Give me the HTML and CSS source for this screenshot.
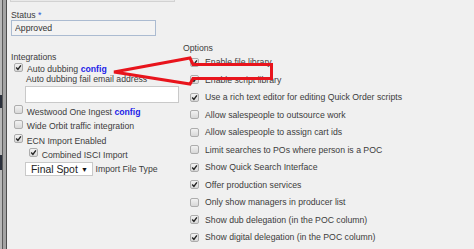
FILE: index.html
```html
<!DOCTYPE html>
<html lang="en">
<head>
    <meta charset="UTF-8">
    <title>Station Settings</title>
    <link rel="stylesheet" href="styles.css">
</head>
<body>
    <div class="page">
        <div class="edge"></div>
        <div class="panel">
            <div class="topbox"></div>
            <div class="cols">
                <div class="left">
                    <div class="status-label">Status <span class="req">*</span></div>
                    <input class="status-input" type="text" value="Approved">

                    <div class="group-label">Integrations</div>
                    <div class="row auto">
                        <span class="box on"><svg viewBox="0 0 7 7"><path d="M1.2 3.6 L2.9 5.4 L5.9 1.3"/></svg></span>
                        <span>Auto dubbing <a class="cfg">config</a></span>
                    </div>
                    <div class="sub-label">Auto dubbing fail email address</div>
                    <input class="email" type="text">

                    <div class="row first">
                        <span class="box"></span>
                        <span>Westwood One Ingest <a class="cfg">config</a></span>
                    </div>
                    <div class="row">
                        <span class="box"></span>
                        <span>Wide Orbit traffic integration</span>
                    </div>
                    <div class="row">
                        <span class="box on"><svg viewBox="0 0 7 7"><path d="M1.2 3.6 L2.9 5.4 L5.9 1.3"/></svg></span>
                        <span>ECN Import Enabled</span>
                    </div>
                    <div class="row nested">
                        <span class="box on"><svg viewBox="0 0 7 7"><path d="M1.2 3.6 L2.9 5.4 L5.9 1.3"/></svg></span>
                        <span>Combined ISCI Import</span>
                    </div>
                    <div class="select-row">
                        <div class="fake-select"><span>Final Spot</span><span class="caret">&#9660;</span></div>
                        <span class="select-label">Import File Type</span>
                    </div>
                </div>

                <div class="right">
                    <div class="group-label-right">Options</div>
                    <div class="opt"><span class="box on"><svg viewBox="0 0 7 7"><path d="M1.2 3.6 L2.9 5.4 L5.9 1.3"/></svg></span>Enable file library</div>
                    <div class="opt"><span class="box on"><svg viewBox="0 0 7 7"><path d="M1.2 3.6 L2.9 5.4 L5.9 1.3"/></svg></span>Enable script library</div>
                    <div class="opt"><span class="box on"><svg viewBox="0 0 7 7"><path d="M1.2 3.6 L2.9 5.4 L5.9 1.3"/></svg></span>Use a rich text editor for editing Quick Order scripts</div>
                    <div class="opt"><span class="box"></span>Allow salespeople to outsource work</div>
                    <div class="opt"><span class="box"></span>Allow salespeople to assign cart ids</div>
                    <div class="opt"><span class="box"></span>Limit searches to POs where person is a POC</div>
                    <div class="opt"><span class="box on"><svg viewBox="0 0 7 7"><path d="M1.2 3.6 L2.9 5.4 L5.9 1.3"/></svg></span>Show Quick Search Interface</div>
                    <div class="opt"><span class="box on"><svg viewBox="0 0 7 7"><path d="M1.2 3.6 L2.9 5.4 L5.9 1.3"/></svg></span>Offer production services</div>
                    <div class="opt"><span class="box"></span>Only show managers in producer list</div>
                    <div class="opt"><span class="box on"><svg viewBox="0 0 7 7"><path d="M1.2 3.6 L2.9 5.4 L5.9 1.3"/></svg></span>Show dub delegation (in the POC column)</div>
                    <div class="opt"><span class="box on"><svg viewBox="0 0 7 7"><path d="M1.2 3.6 L2.9 5.4 L5.9 1.3"/></svg></span>Show digital delegation (in the POC column)</div>
                </div>
            </div>
        </div>

        <!-- annotation drawn over the form -->
        <svg class="arrow" viewBox="0 0 474 249">
            <polygon points="114,72 190,58 193,64.5 271.5,64.5 271.5,78.5 193,78.5 190,84"/>
        </svg>
    </div>
</body>
</html>
```

FILE: styles.css
```css
body {
    margin: 0;
    background-color: #f0f0f0;
    font-family: "Liberation Sans", Arial, sans-serif;
    font-size: 8.7px;
    color: #3c3c3c;
}
.page {
    position: relative;
    display: flex;
    height: 249px;
    overflow: hidden;
}
.edge {
    flex: none;
    width: 7px;
    background:
        linear-gradient(#2b303c, #2b303c) 0 95px / 2px 13px no-repeat,
        linear-gradient(#2b303c, #2b303c) 0 155px / 2px 15px no-repeat,
        linear-gradient(to right, #b8b8b8 0 2px, #5a5a5a 2px 3px, #a4a4a4 3px 6px, #4e4e4e 6px 7px);
}
.panel {
    flex: 1;
    padding-left: 4px;
}
.topbox {
    margin-left: -1px;
    width: 163px;
    height: 1px;
    border: 1px solid #d2d2d2;
    border-top: none;
    background-color: #e9e9e9;
}
.cols {
    display: flex;
}
.left {
    width: 167px;
    padding-top: 8.3px;
}
.right {
    margin-left: 5px;
    padding-top: 40.5px;
}
.status-label {
    line-height: 10px;
}
.req {
    color: #2e55d6;
}
input {
    display: block;
    box-sizing: border-box;
    margin: 0;
    font-family: inherit;
    font-size: 8.7px;
    color: #333;
    outline: none;
}
.status-input {
    width: 145px;
    height: 16px;
    padding: 0 3px;
    border: 1px solid #abbbd1;
    background-color: #f3f3f3;
}
.group-label {
    margin-top: 16.2px;
    line-height: 11px;
}
.group-label-right {
    line-height: 11px;
}
.row {
    display: flex;
    align-items: flex-start;
    line-height: 14.3px;
    padding-left: 3px;
}
.row .box {
    margin-top: 0.3px;
    margin-right: 3.7px;
}
.row.auto {
    line-height: 12px;
}
.row.auto .box {
    margin-top: 0;
    margin-right: 4px;
}
.row.first {
    margin-top: 2.3px;
}
.row.nested {
    padding-left: 18px;
}
.sub-label {
    padding-left: 15px;
    line-height: 9px;
}
.email {
    margin: 1.7px 0 0 14px;
    width: 154px;
    height: 16.5px;
    border: 1px solid #c9c9c9;
    background-color: #fff;
}
.cfg {
    color: #1d1de8;
    font-weight: bold;
}
.box {
    flex: none;
    box-sizing: border-box;
    width: 9px;
    height: 9px;
    border: 1px solid #adadad;
    border-radius: 2px;
    background: linear-gradient(#f2f2f2, #d8d8d8);
}
.box svg {
    display: block;
    width: 7px;
    height: 7px;
}
.box path {
    fill: none;
    stroke: #222;
    stroke-width: 1.4;
}
.select-row {
    display: flex;
    align-items: center;
    margin: 0.3px 0 0 14px;
}
.fake-select {
    display: flex;
    align-items: center;
    justify-content: space-between;
    box-sizing: border-box;
    width: 68px;
    height: 14px;
    padding: 0 4px 0 5px;
    border: 1px solid #c9c9c9;
    background-color: #fff;
    font-size: 10.4px;
    color: #222;
}
.caret {
    font-size: 7px;
    color: #111;
}
.select-label {
    margin-left: 2.5px;
}
.opt {
    display: flex;
    align-items: center;
    height: 17.5px;
    padding-left: 7px;
    white-space: nowrap;
}
.opt .box {
    margin-right: 6px;
}
.arrow {
    position: absolute;
    left: 0;
    top: 0;
    width: 474px;
    height: 249px;
    pointer-events: none;
}
.arrow polygon {
    fill: none;
    stroke: #e8141c;
    stroke-width: 3;
    stroke-linejoin: miter;
}
```
